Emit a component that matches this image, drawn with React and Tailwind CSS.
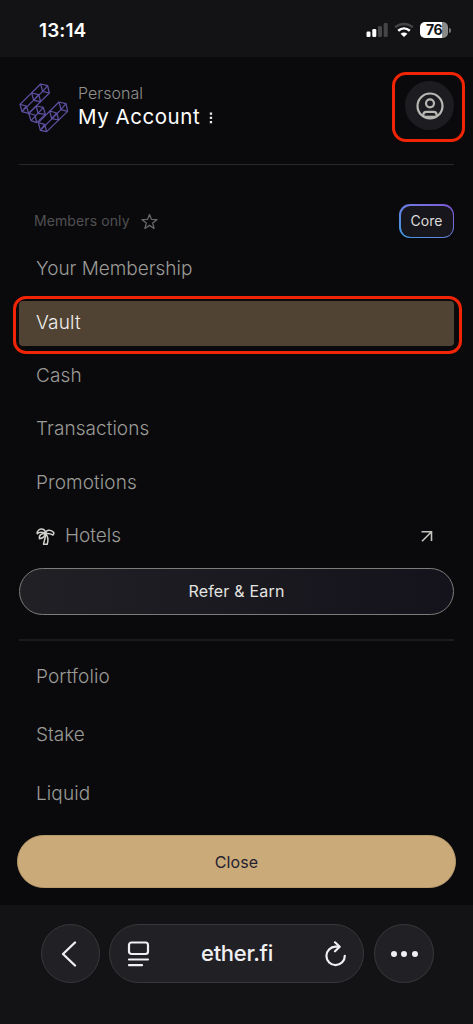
const menuItems = [
  { label: 'Your Membership', tracking: 'tracking-[-0.02px]' },
  { label: 'Vault', tracking: 'tracking-[0.2px]', active: true },
  { label: 'Cash', tracking: 'tracking-[0.1px]' },
  { label: 'Transactions', tracking: 'tracking-[0.05px]' },
  { label: 'Promotions', tracking: 'tracking-[0.1px]' }
]

const lowerItems = [
  { label: 'Portfolio', tracking: 'tracking-[0.1px]' },
  { label: 'Stake', tracking: 'tracking-[0px]' },
  { label: 'Liquid', tracking: 'tracking-[0.1px]' }
]

function Logo() {
  return (
    <svg className="h-[50px] w-[50px] shrink-0" viewBox="27 39 150 150" fill="none" stroke="#5d50a0" strokeWidth="3.8" strokeLinejoin="round">
      {/* upper bar */}
      <path d="M92 42L113 47L118 69L56 130L36 125L30 103Z" />
      <path d="M92 42L98 64L118 69M98 64L113 47M98 64L36 125M30 103L49 108L56 130M49 108L36 125" />
      <path d="M65 69L86 74L92 95L71 91ZM71 91L86 74" />
      {/* connector */}
      <path d="M56 130L79 108L100 112L106 133L80 158L63 152Z" />
      <path d="M79 108L84 130L106 133M84 130L100 112M84 130L63 152M56 130L75 135L80 158" />
      {/* lower bar */}
      <path d="M147 96L168 101L173 124L110 185L91 181L85 158Z" />
      <path d="M147 96L153 119L173 124M153 119L168 101M153 119L91 181M85 158L104 163L110 185M91 181L104 163" />
      <path d="M119 123L140 129L146 150L125 146ZM125 146L140 129" />
    </svg>
  )
}

function StatusBar() {
  return (
    <div className="flex h-[57px] items-start justify-between bg-[#131315] pl-[39px] pr-[22px] pt-[19px]">
      <span className="text-[19px] font-semibold leading-6 tracking-[0.1px] text-white">13:14</span>
      <div className="flex items-center pt-[3px]">
        <svg className="mr-[6px] h-4 w-[22px]" viewBox="0 0 22 16">
          <rect x="0.5" y="9.5" width="4" height="5.5" rx="1.2" fill="#fff" />
          <rect x="6.3" y="7" width="4" height="8" rx="1.2" fill="#fff" />
          <rect x="12" y="4" width="4" height="11" rx="1.2" fill="#454547" />
          <rect x="17.7" y="1" width="4" height="14" rx="1.2" fill="#454547" />
        </svg>
        <svg className="mr-[6px] h-4 w-5" viewBox="0 0 20 16" fill="none" strokeWidth="2.5">
          <path d="M1.2 5.4C6.2 0.7 13.8 0.7 18.8 5.4" stroke="#454547" />
          <path d="M4.2 8.8C7.7 5.8 12.3 5.8 15.8 8.8" stroke="#fff" />
          <path d="M10 15L6.6 11.8C8.6 10.1 11.4 10.1 13.4 11.8Z" fill="#fff" />
        </svg>
        <div className="flex h-4 w-[28px] items-center justify-center rounded-[5px] bg-linear-to-r from-white from-78% to-[#8a8a88] to-78% text-[14px] font-bold leading-4 tracking-[-0.4px] text-[#131315]">
          76
        </div>
        <div className="ml-px h-[5px] w-[2px] rounded-r-full bg-[#777775]" />
      </div>
    </div>
  )
}

function Header() {
  return (
    <header className="mx-[19px] flex h-[108px] justify-between border-b border-[#29292a]">
      <div className="flex pt-[26px]">
        <Logo />
        <div className="ml-[9px]">
          <p className="text-[16px] font-[350] leading-5 tracking-[0.05px] text-[#91918e]">Personal</p>
          <div className="mt-[2px] flex items-center">
            <p className="text-[20.5px] leading-6 tracking-[0.55px] text-white">My Account</p>
            <svg className="ml-[9px] mt-[1px] h-3 w-1" viewBox="0 0 4 12" fill="#e5e5e5">
              <rect x="0.8" y="0.5" width="2.3" height="2.3" />
              <rect x="0.8" y="4.7" width="2.3" height="2.3" />
              <rect x="0.8" y="9" width="2.3" height="2.3" />
            </svg>
          </div>
        </div>
      </div>
      <button className="relative mt-6 flex h-[49px] w-[49px] items-center justify-center rounded-full bg-[#1d1c21]">
        <svg className="h-7 w-7" viewBox="0 0 28 28" fill="none" stroke="#b8b8b3" strokeWidth="2.2">
          <circle cx="14" cy="14" r="12.5" />
          <circle cx="14" cy="11.3" r="4" />
          <path d="M7.3 24.5V23Q7.3 19.8 10.5 19.8H17.5Q20.7 19.8 20.7 23V24.5" />
          <path d="M8 24.8H20" />
        </svg>
        <span className="absolute -left-[13px] -top-[9px] h-[70px] w-[73px] rounded-[14px] border-[3px] border-[#f22406]" />
      </button>
    </header>
  )
}

function MembersMenu() {
  return (
    <section className="pl-[19px] pr-[19px]">
      <div className="mb-[5px] mt-[39px] flex h-[34px] items-center justify-between pl-[15px]">
        <div className="flex items-center gap-[11px]">
          <span className="text-[14px] leading-5 tracking-[0.1px] text-[#505052]">Members only</span>
          <svg className="h-[17px] w-[17px]" viewBox="0 0 24 24" fill="none" stroke="#69696a" strokeWidth="1.8" strokeLinejoin="round">
            <path d="M12 2L14.8 9L22.5 9.4L16.5 14.2L18.5 21.8L12 17.5L5.5 21.8L7.5 14.2L1.5 9.4L9.2 9Z" />
          </svg>
        </div>
        <div className="h-[34px] w-[55px] rounded-[11px] bg-linear-to-tr from-[#329ee3] to-[#8056d8] p-[1.5px]">
          <div className="flex h-full items-center justify-center rounded-[9.5px] bg-[#17161c] text-[14px] leading-5 tracking-[0.1px] text-[#dcdcda]">
            Core
          </div>
        </div>
      </div>

      <nav>
        {menuItems.map(item => (
          <div key={item.label} className="flex h-[53.35px] items-center">
            <a
              className={`relative flex h-[45px] w-full items-center rounded-[4px] pl-[17px] text-[19px] font-[350] ${item.tracking} ${
                item.active ? 'bg-[#504333] text-[#f0efed]' : 'text-[#9b9b97]'
              }`}
            >
              {item.label}
              {item.active && (
                <span className="absolute -left-[6px] -right-[8px] -top-[5px] h-[58px] rounded-[13px] border-[3px] border-[#f22406]" />
              )}
            </a>
          </div>
        ))}
        <a className="flex h-[53px] items-center pl-[17px] pr-[21px] text-[19px] font-[350] text-[#9b9b97]">
          <svg className="mr-[10px] h-[19px] w-[19px]" viewBox="0 0 19 19" fill="none" stroke="#d0d0cd" strokeWidth="1.5" strokeLinejoin="round">
            <path d="M9.5 6.5C7.5 5 3.5 4.3 1.3 6.8C0.7 3.7 3.8 1.2 7 2.2C8.7 2.8 9.5 4.4 9.5 6.5Z" />
            <path d="M9.5 6.5C9.8 3 14.5 1.6 17.8 5.6C18 7 17.5 7.5 17 8C15 6.7 12.5 6.3 9.5 6.5Z" />
            <path d="M9.5 6.5C6.4 6.1 2.7 7.7 3.4 11.7C5.8 11.4 8.8 9.7 9.5 6.5Z" />
            <path d="M9.5 6.5C10 10 8.2 13.5 7.5 17.2H11.2C12.5 13 12 9 9.5 6.5Z" />
          </svg>
          Hotels
          <svg className="ml-auto h-3 w-3" viewBox="0 0 12 12" fill="none" stroke="#c4c4c0" strokeWidth="1.6">
            <path d="M0.5 1.7H10.5V11M10.5 1.7L1 11.3" />
          </svg>
        </a>
      </nav>

      <button className="mt-[5px] flex h-[47px] w-full items-center justify-center rounded-full border border-[#7c7c7b] bg-linear-to-r from-[#212025] to-[#14131b] text-[16px] font-normal tracking-[0.2px] text-[#e4e4e0]">
        Refer &amp; Earn
      </button>
    </section>
  )
}

function BrowserBar() {
  return (
    <footer className="flex h-[119px] items-start bg-[#131315] pl-[41px] pt-[19px] text-[#f0f0f2]">
      <button className="flex h-[59px] w-[59px] items-center justify-center rounded-full border border-[#38383b] bg-[#212125]">
        <svg className="mr-[3px] h-[26px] w-4" viewBox="0 0 16 26" fill="none" stroke="currentColor" strokeWidth="2.3" strokeLinecap="round" strokeLinejoin="round">
          <path d="M14 1.5L2 13L14 24.5" />
        </svg>
      </button>
      <div className="ml-[9px] flex h-[59px] w-[255px] items-center rounded-full border border-[#38383b] bg-[#212125] pl-[17px] pr-4">
        <svg className="h-[26px] w-[23px]" viewBox="0 0 23 26" fill="none" stroke="currentColor" strokeWidth="2.2" strokeLinecap="round">
          <rect x="2" y="1.5" width="19" height="11.5" rx="2.5" />
          <path d="M2 18.5H21M2 24.2H15" />
        </svg>
        <span className="flex-1 text-center text-[22px] font-medium tracking-[-0.3px]">ether.fi</span>
        <svg className="h-[26px] w-[23px]" viewBox="0 0 23 26" fill="none" stroke="currentColor" strokeWidth="2.2" strokeLinecap="round" strokeLinejoin="round">
          <path d="M15 5.7H11.5A9.2 9.2 0 1 0 20.8 14.8" />
          <path d="M11 1.3L15.7 5.7L11 10.3" />
        </svg>
      </div>
      <button className="ml-[10px] flex h-[59px] w-[60px] items-center justify-center gap-[4.5px] rounded-full border border-[#38383b] bg-[#212125]">
        <span className="h-[6px] w-[6px] rounded-full bg-current" />
        <span className="h-[6px] w-[6px] rounded-full bg-current" />
        <span className="h-[6px] w-[6px] rounded-full bg-current" />
      </button>
    </footer>
  )
}

export default function App() {
  return (
    <div className="flex h-[1024px] w-[473px] flex-col overflow-hidden bg-[#0a0a0c] font-[Inter,sans-serif]">
      <StatusBar />
      <Header />
      <MembersMenu />
      <nav className="mx-[19px] mt-[24px] border-t-2 border-[#1b1b1d] pt-[7px]">
        {lowerItems.map(item => (
          <a key={item.label} className={`flex h-[58.5px] items-center pl-[17px] text-[19px] font-[350] text-[#9b9b97] ${item.tracking}`}>
            {item.label}
          </a>
        ))}
      </nav>
      <div className="mt-auto px-[17px] pb-[17px]">
        <button className="flex h-[53px] w-full items-center justify-center rounded-full border border-[#b99a6c] bg-[#cbaa79] text-[16px] font-normal tracking-[0.1px] text-[#252131]">
          Close
        </button>
      </div>
      <BrowserBar />
    </div>
  )
}
